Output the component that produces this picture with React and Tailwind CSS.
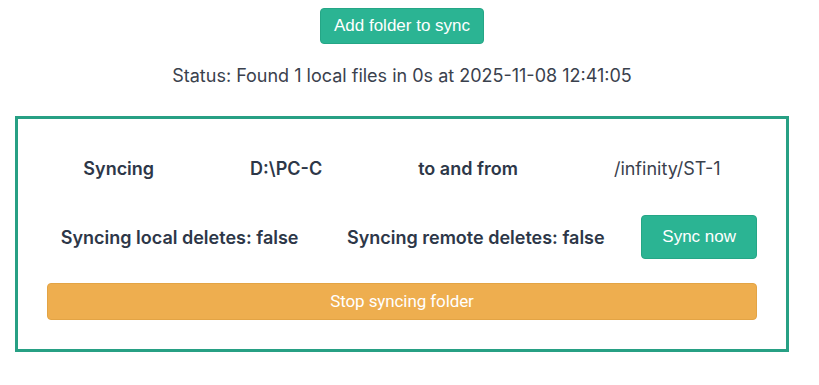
export default function App() {
  return (
    <div className="w-[819px] h-[385px] bg-white overflow-hidden" style={{ fontFamily: "Inter, 'Noto Sans', sans-serif" }}>
      <div className="ml-[15px] w-[774px] flex flex-col items-center">
        <button
          className="mt-[8px] h-[36px] w-[164px] rounded-[4px] bg-[#2bb493] border border-[#25a686] text-white text-[17px]"
          style={{ fontFamily: "'Liberation Sans', Arial, sans-serif" }}
        >
          Add folder to sync
        </button>
        <div className="mt-[18px] h-[27px] leading-[27px] text-[18px] text-[#3a414d]">
          Status: Found 1 local files in 0s at 2025-11-08 12:41:05
        </div>
        <div className="mt-[27px] w-[774px] h-[236px] border-[3px] border-[#27a084] pt-[36px] px-[29px] pb-[29px] flex flex-col">
          <div className="h-[27px] flex justify-center items-center gap-[96px] text-[18px] text-[#2d3748] leading-[27px]">
            <span className="font-semibold">Syncing</span>
            <span className="font-semibold">D:\PC-C</span>
            <span className="font-semibold">to and from</span>
            <span className="font-normal text-[#3a414d]">/infinity/ST-1</span>
          </div>
          <div className="mt-[33px] h-[44px] flex items-center text-[18px] text-[#2d3748] font-semibold">
            <div className="w-[266px] text-center">Syncing local deletes: false</div>
            <div className="w-[328px] text-center">Syncing remote deletes: false</div>
            <button
              className="w-[116px] h-[44px] rounded-[4px] bg-[#2bb493] border border-[#25a686] text-white text-[17px] font-normal ml-[2px]"
              style={{ fontFamily: "'Liberation Sans', Arial, sans-serif" }}
            >
              Sync now
            </button>
          </div>
          <button
            className="mt-[24px] h-[37px] w-full rounded-[4px] bg-[#eeae4f] border border-[#e3a445] text-white text-[17px] tracking-[-0.1px]"
            style={{ fontFamily: "Roboto, sans-serif" }}
          >
            Stop syncing folder
          </button>
        </div>
      </div>
    </div>
  );
}
